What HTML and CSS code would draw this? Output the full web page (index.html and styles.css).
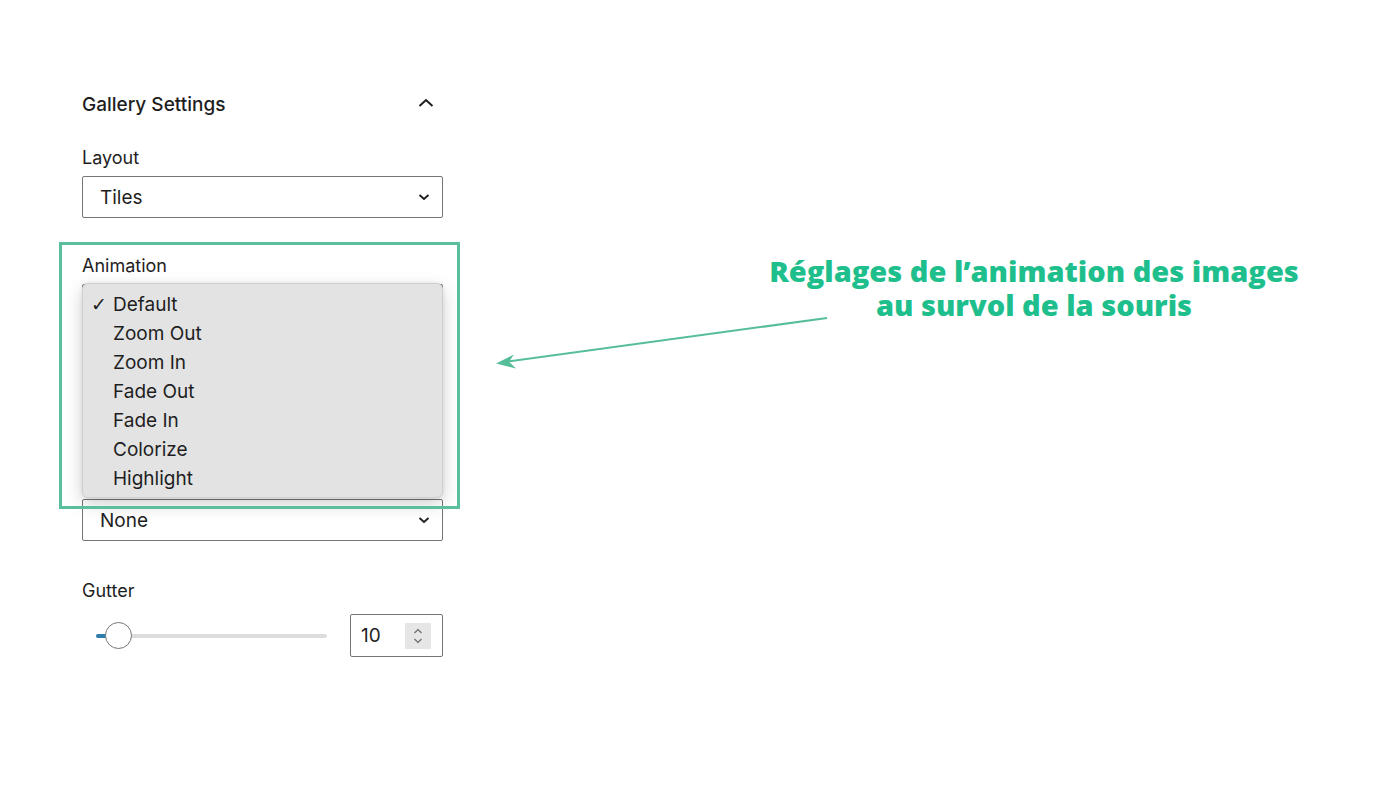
FILE: index.html
```html
<!DOCTYPE html>
<html lang="fr">
<head>
<meta charset="utf-8">
<title>Gallery Settings</title>
<link rel="stylesheet" href="styles.css">
</head>
<body>
<div class="page">
  <section class="panel">
    <div class="panel-head">
      <h2 class="panel-title">Gallery Settings</h2>
      <svg class="chev-up" width="18" height="12" viewBox="0 0 18 12"><path d="M2.5 9 L9 3 L15.5 9" fill="none" stroke="#1e1e1e" stroke-width="2"/></svg>
    </div>

    <div class="field">
      <label class="label">Layout</label>
      <div class="select"><span>Tiles</span><svg width="12" height="8" viewBox="0 0 12 8"><path d="M1.5 2 L6 6 L10.5 2" fill="none" stroke="#1e1e1e" stroke-width="1.8"/></svg></div>
    </div>

    <div class="field field-anim">
      <label class="label">Animation</label>
      <div class="select"></div>
      <ul class="menu">
        <li class="menu-item"><span class="check">✓</span><span>Default</span></li>
        <li class="menu-item"><span class="check"></span><span>Zoom Out</span></li>
        <li class="menu-item"><span class="check"></span><span>Zoom In</span></li>
        <li class="menu-item"><span class="check"></span><span>Fade Out</span></li>
        <li class="menu-item"><span class="check"></span><span>Fade In</span></li>
        <li class="menu-item"><span class="check"></span><span>Colorize</span></li>
        <li class="menu-item"><span class="check"></span><span>Highlight</span></li>
      </ul>
    </div>

    <div class="field field-lightbox">
      <div class="select"><span>None</span><svg width="12" height="8" viewBox="0 0 12 8"><path d="M1.5 2 L6 6 L10.5 2" fill="none" stroke="#1e1e1e" stroke-width="1.8"/></svg></div>
    </div>

    <div class="field field-gutter">
      <label class="label">Gutter</label>
      <div class="range-row">
        <div class="slider">
          <div class="track"><div class="fill"></div></div>
          <div class="thumb"></div>
        </div>
        <div class="number">
          <span>10</span>
          <span class="spin"><svg width="12" height="20" viewBox="0 0 12 20"><path d="M2.5 7 L6 3.5 L9.5 7 M2.5 13 L6 16.5 L9.5 13" fill="none" stroke="#6b6b6b" stroke-width="1.2"/></svg></span>
        </div>
      </div>
    </div>
  </section>

  <div class="highlight-box"></div>
  <svg class="arrow" width="1400" height="787" viewBox="0 0 1400 787">
    <line x1="827" y1="318" x2="505" y2="362" stroke="#55bd98" stroke-width="2"/>
    <path d="M496 363.5 L514 354.5 L509 361.8 L516 368.5 Z" fill="#55bd98"/>
  </svg>
  <p class="annotation">Réglages de l’animation des images<br>au survol de la souris</p>
</div>
</body>
</html>
```

FILE: styles.css
```css
* { box-sizing: border-box; }
html, body { margin: 0; padding: 0; background: #fff; }
body {
  font-family: Inter, "Noto Sans", "Liberation Sans", sans-serif;
  color: #1e1e1e;
}
.page {
  position: relative;
  width: 1400px;
  height: 787px;
  overflow: hidden;
}
.panel {
  width: 361px;
  margin-left: 82px;
  padding-top: 92px;
  display: flex;
  flex-direction: column;
}
.panel-head {
  display: flex;
  justify-content: space-between;
  align-items: center;
  height: 24px;
}
.panel-title {
  margin: 0;
  font-size: 19px;
  font-weight: 500;
  line-height: 24px;
  padding-top: 1px;
}
.chev-up { margin-right: 8px; margin-top: -3px; }
.field {
  display: flex;
  flex-direction: column;
  gap: 7px;
  margin-top: 31px;
}
.label {
  font-size: 18px;
  line-height: 22px;
}
.select {
  height: 42px;
  border: 1px solid #757575;
  border-radius: 2px;
  display: flex;
  align-items: center;
  justify-content: space-between;
  padding: 0 12px 0 17px;
  font-size: 19px;
}
.field-anim { position: relative; margin-top: 37px; }
.field-lightbox { margin-top: 173px; }
.field-gutter { margin-top: 39px; gap: 12px; }
.menu {
  position: absolute;
  left: 0;
  top: 28px;
  width: 361px;
  margin: 0;
  padding: 6px 0 4px;
  list-style: none;
  background: #e3e3e3;
  border: 1px solid #cfcfcf;
  border-radius: 6px;
  box-shadow: 0 6px 18px rgba(0,0,0,0.18), 0 0 4px rgba(0,0,0,0.08);
}
.menu-item {
  display: flex;
  align-items: center;
  height: 29px;
  font-size: 19px;
  padding-left: 8px;
}
.check {
  width: 22px;
  font-family: "DejaVu Sans", sans-serif;
  font-size: 19px;
  line-height: 1;
}
.range-row {
  display: flex;
  align-items: center;
  justify-content: space-between;
}
.slider {
  position: relative;
  width: 245px;
  height: 43px;
  display: flex;
  align-items: center;
}
.track {
  margin-left: 14px;
  width: 231px;
  height: 4px;
  background: #dcdcde;
  border-radius: 2px;
  position: relative;
}
.fill {
  width: 12px;
  height: 4px;
  background: #2f7fad;
  border-radius: 2px 0 0 2px;
}
.thumb {
  position: absolute;
  left: 23px;
  top: 8px;
  width: 27px;
  height: 27px;
  border-radius: 50%;
  background: #fff;
  border: 1px solid #757575;
}
.number {
  width: 93px;
  height: 43px;
  border: 1px solid #757575;
  border-radius: 2px;
  display: flex;
  align-items: center;
  justify-content: space-between;
  padding: 0 11px 0 10px;
  font-size: 19px;
}
.spin {
  width: 26px;
  height: 26px;
  background: #e6e6e6;
  display: flex;
  align-items: center;
  justify-content: center;
}
.highlight-box {
  position: absolute;
  left: 59px;
  top: 242px;
  width: 401px;
  height: 267px;
  border: 3px solid #5cbf9b;
}
.arrow {
  position: absolute;
  left: 0;
  top: 0;
  pointer-events: none;
}
.annotation {
  position: absolute;
  left: 734px;
  top: 254px;
  width: 600px;
  margin: 0;
  text-align: center;
  font-family: "Open Sans", Lato, sans-serif;
  font-weight: 800;
  font-size: 29px;
  line-height: 34px;
  color: #1fbf8d;
}
```
